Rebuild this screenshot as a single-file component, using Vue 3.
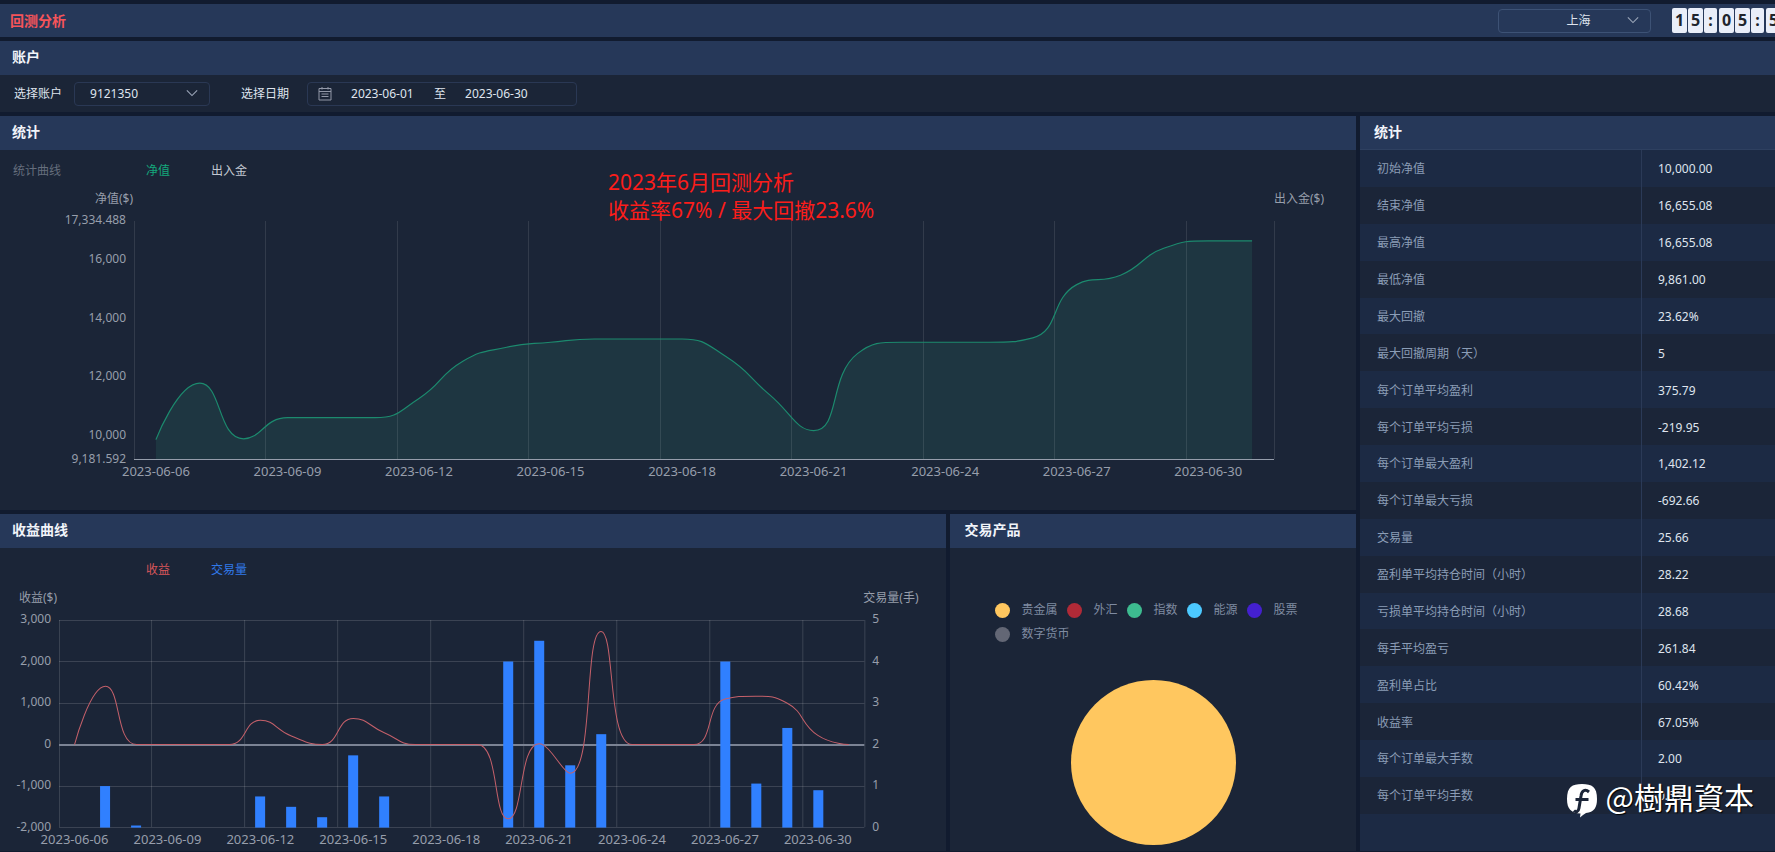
<template>
  <div class="page">
    <header class="topbar">
      <h1 class="topbar-title">回测分析</h1>
      <div class="select-box city">
        <select v-model="city" aria-label="城市">
          <option>上海</option>
        </select>
        <svg class="arrow" viewBox="0 0 14 8"><path d="M1 1l6 6 6-6" /></svg>
      </div>
      <div class="clock">
        <span v-for="(c, i) in clock" :key="i" :class="c === ':' ? 'colon' : 'digit'">{{ c }}</span>
      </div>
    </header>

    <section class="panel">
      <h2 class="panel-title">账户</h2>
      <form class="filters">
        <label for="account">选择账户</label>
        <div class="select-box account">
          <select id="account" v-model="account">
            <option>9121350</option>
          </select>
          <svg class="arrow" viewBox="0 0 14 8"><path d="M1 1l6 6 6-6" /></svg>
        </div>
        <label for="start" class="date-label">选择日期</label>
        <div class="range">
          <svg class="calendar" viewBox="0 0 14 14">
            <path d="M1 1.5h12v11.500h-12zM1 4.500h12M4 0v2.500M10 0v2.500M3.500 7h7M3.500 9.500h7" />
          </svg>
          <input id="start" v-model="startDate" type="text" />
          <span>至</span>
          <input v-model="endDate" type="text" aria-label="结束日期" />
        </div>
      </form>
    </section>

    <main class="content">
      <div class="charts">
        <section class="panel net">
          <h2 class="panel-title">统计</h2>
          <div class="tabs">
            <span class="tabs-name">统计曲线</span>
            <button type="button" class="green">净值</button>
            <button type="button">出入金</button>
          </div>
          <svg class="chart" viewBox="0 0 1356 318">
            <text x="133" y="11" text-anchor="end">净值($)</text>
            <text x="1274" y="11">出入金($)</text>
            <path class="area" :d="netArea" />
            <line v-for="x in netGrid" :key="x" class="grid" :x1="x" :x2="x" y1="29" y2="267" />
            <path class="net-line" :d="netLine" />
            <line class="axis" x1="134" x2="1274" y1="267.5" y2="267.5" />
            <text v-for="t in netTicks" :key="t.label" x="126" :y="t.y" text-anchor="end">{{ t.label }}</text>
            <text
              v-for="(d, i) in dates"
              :key="d"
              class="date"
              :x="net.left + net.step * (i * 3 + 0.5)"
              y="284"
              text-anchor="middle"
            >{{ d }}</text>
          </svg>
          <!-- 标注 -->
          <p class="note">2023年6月回测分析<br />收益率67% / 最大回撤23.6%</p>
        </section>

        <div class="bottom">
          <section class="panel">
            <h2 class="panel-title">收益曲线</h2>
            <div class="tabs profit-tabs">
              <button type="button" class="red">收益</button>
              <button type="button" class="blue">交易量</button>
            </div>
            <svg class="chart" viewBox="0 0 946 260">
              <text x="19" y="11">收益($)</text>
              <text x="863" y="11">交易量(手)</text>
              <line v-for="x in profitGrid" :key="'v' + x" class="grid bright" :x1="x" :x2="x" y1="29" y2="236" />
              <line v-for="y in profitRows" :key="'h' + y" class="grid bright" x1="59" x2="864" :y1="y" :y2="y" />
              <line class="axis zero" x1="59" x2="864" y1="154" y2="154" />
              <rect
                v-for="b in bars"
                :key="b.x"
                class="bar"
                :x="b.x"
                :y="b.y"
                width="10"
                :height="b.height"
              />
              <path class="profit-line" :d="profitLine" />
              <text v-for="(t, i) in profitTicks" :key="t" x="51" :y="32 + i * 41.5" text-anchor="end">{{ t }}</text>
              <text v-for="n in 6" :key="n" x="872" :y="32 + (n - 1) * 41.5">{{ 6 - n }}</text>
              <text
                v-for="(d, i) in dates"
                :key="d"
                class="date"
                :x="profit.left + profit.step * (i * 3 + 0.5)"
                y="253"
                text-anchor="middle"
              >{{ d }}</text>
            </svg>
          </section>

          <section class="panel products">
            <h2 class="panel-title">交易产品</h2>
            <ul class="legend">
              <li v-for="p in products" :key="p.name">
                <i :style="{ backgroundColor: p.color }"></i>{{ p.name }}
              </li>
            </ul>
            <div class="pie"></div>
          </section>
        </div>
      </div>

      <section class="panel stats">
        <h2 class="panel-title">统计</h2>
        <table>
          <tbody>
            <tr v-for="row in stats" :key="row[0]">
              <th scope="row">{{ row[0] }}</th>
              <td>{{ row[1] }}</td>
            </tr>
          </tbody>
        </table>
      </section>
    </main>

    <div class="watermark">
      <svg viewBox="0 0 30 34">
        <path
          class="mark"
          d="M15 0C25 0 30 3 30 15C30 24 27 28 19 29C17 30 15 32 13 33.500L13.500 29.500C4 29 0 25 0 15C0 3 5 0 15 0Z"
        />
        <path class="f" d="M22 8C18 4.500 14.500 7 14 12L12 24C11.500 28 9 28.500 7 26.500M8.500 15.500H21.500" />
      </svg>
      <span>@樹鼎資本</span>
    </div>
  </div>
</template>

<script setup>
import { ref } from 'vue'

const city = ref('上海')
const account = ref('9121350')
const startDate = ref('2023-06-01')
const endDate = ref('2023-06-30')
const clock = '15:05:5'.split('')

const dates = [
  '2023-06-06', '2023-06-09', '2023-06-12', '2023-06-15', '2023-06-18',
  '2023-06-21', '2023-06-24', '2023-06-27', '2023-06-30'
]

const clamp = (v, a, b) => Math.max(Math.min(v, Math.max(a, b)), Math.min(a, b))

// 平滑曲线，控制点限制在相邻两点之间，避免过冲
const smoothPath = (points) => {
  let d = `M${points[0][0]} ${points[0][1]}`
  let out = points[0]
  for (let i = 1; i < points.length; i++) {
    const prev = points[i - 1]
    const cur = points[i]
    const next = points[i + 1]
    let cpIn = cur
    let cpOut = cur
    if (next) {
      const lenPrev = Math.hypot(cur[0] - prev[0], cur[1] - prev[1])
      const lenNext = Math.hypot(next[0] - cur[0], next[1] - cur[1])
      const ratio = lenNext / (lenNext + lenPrev)
      cpOut = cur.map((c, k) => clamp(c + (next[k] - prev[k]) * 0.5 * ratio, c, next[k]))
      cpIn = cur.map((c, k) => clamp(c - ((cpOut[k] - c) * lenPrev) / lenNext, prev[k], c))
      cpOut = cur.map((c, k) => c + ((c - cpIn[k]) * lenNext) / lenPrev)
    }
    d += `C${out[0]} ${out[1]} ${cpIn[0]} ${cpIn[1]} ${cur[0]} ${cur[1]}`
    out = cpOut
  }
  return d
}

// 净值
const net = { left: 134, step: 1140 / 26, top: 29, bottom: 267.5, min: 9181.592, max: 17334.488 }
const netY = (v) => net.bottom - ((v - net.min) / (net.max - net.min)) * (net.bottom - net.top)
const netValues = [
  9861, 11790, 9890, 10610, 10610, 10610, 11270, 12540, 13020, 13190, 13300, 13300, 13300,
  12700, 11390, 10170, 12800, 13190, 13190, 13190, 13340, 15160, 15480, 16410, 16655, 16655
]
const netPoints = netValues.map((v, i) => [net.left + net.step * (i + 0.5), netY(v)])
const netLine = smoothPath(netPoints)
const netArea = `${netLine}V${net.bottom}H${netPoints[0][0]}Z`
const netGrid = [0, 3, 6, 9, 12, 15, 18, 21, 24, 26].map((i) => Math.floor(net.left + net.step * i) + 0.5)
const netTicks = [17334.488, 16000, 14000, 12000, 10000, 9181.592].map((v) => ({
  label: v.toLocaleString('en-US', { maximumFractionDigits: 3 }),
  y: netY(v) + 3
}))

// 收益与交易量
const profit = { left: 59, step: 805 / 26, top: 29, row: 41.5 }
const profitValues = [
  0, 1402, 0, 0, 0, 0, 585, 205, 0, 630, 285, 0, 0,
  0, -1790, 20, -692, 2725, 0, 0, 0, 1095, 1165, 1000, 220, 0
]
const volumes = [
  0, 1, 0.05, 0, 0, 0, 0.75, 0.5, 0.25, 1.74, 0.75, 0, 0,
  0, 4, 4.5, 1.5, 2.25, 0, 0, 0, 4, 1.06, 2.4, 0.9, 0
]
const profitLine = smoothPath(
  profitValues.map((v, i) => [
    profit.left + profit.step * (i + 0.5),
    profit.top + (3 - v / 1000) * profit.row
  ])
)
const bars = volumes
  .map((v, i) => ({
    x: Math.round(profit.left + profit.step * (i + 0.5) - 5),
    y: profit.top + (5 - v) * profit.row,
    height: v * profit.row
  }))
  .filter((b) => b.height > 0)
const profitGrid = [0, 3, 6, 9, 12, 15, 18, 21, 24, 26].map((i) => Math.floor(profit.left + profit.step * i) + 0.5)
const profitRows = [0, 1, 2, 4, 5].map((i) => Math.floor(profit.top + profit.row * i) + 0.5)
const profitTicks = ['3,000', '2,000', '1,000', '0', '-1,000', '-2,000']

const products = [
  { name: '贵金属', color: '#ffc75f' },
  { name: '外汇', color: '#b02a37' },
  { name: '指数', color: '#3dbb8f' },
  { name: '能源', color: '#4cc9ff' },
  { name: '股票', color: '#4420cf' },
  { name: '数字货币', color: '#636775' }
]

const stats = [
  ['初始净值', '10,000.00'],
  ['结束净值', '16,655.08'],
  ['最高净值', '16,655.08'],
  ['最低净值', '9,861.00'],
  ['最大回撤', '23.62%'],
  ['最大回撤周期（天）', '5'],
  ['每个订单平均盈利', '375.79'],
  ['每个订单平均亏损', '-219.95'],
  ['每个订单最大盈利', '1,402.12'],
  ['每个订单最大亏损', '-692.66'],
  ['交易量', '25.66'],
  ['盈利单平均持仓时间（小时）', '28.22'],
  ['亏损单平均持仓时间（小时）', '28.68'],
  ['每手平均盈亏', '261.84'],
  ['盈利单占比', '60.42%'],
  ['收益率', '67.05%'],
  ['每个订单最大手数', '2.00'],
  ['每个订单平均手数', '0.53']
]
</script>

<style>
body {
  margin: 0;
  background: #111b2f;
}
</style>

<style scoped>
.page {
  position: relative;
  box-sizing: border-box;
  min-height: 100vh;
  padding: 4px 0 1px;
  display: flex;
  flex-direction: column;
  gap: 4px;
  overflow: hidden;
  background: #111b2f;
  color: #dfe4ee;
  font-family: 'Noto Sans', 'Noto Sans CJK SC', sans-serif;
  font-size: 12px;
  line-height: 18px;
}

.topbar {
  display: flex;
  align-items: center;
  height: 33px;
  padding-left: 10px;
  overflow: hidden;
  background: #263859;
}

.topbar-title {
  margin: 0 auto 0 0;
  color: #f5545a;
  font-size: 14px;
  font-weight: 700;
}

.select-box {
  position: relative;
  box-sizing: border-box;
  height: 24px;
  border: 1px solid #2a3854;
  border-radius: 4px;
}

.select-box select {
  width: 100%;
  height: 100%;
  padding: 0 15px;
  border: 0;
  background: transparent;
  color: inherit;
  font: inherit;
  appearance: none;
}

.arrow {
  position: absolute;
  top: 6px;
  right: 11px;
  width: 12px;
  height: 8px;
  fill: none;
  stroke: #9aa5b8;
  stroke-width: 1.3;
  pointer-events: none;
}

.city {
  width: 153px;
  border-color: #3d5275;
}

.city select {
  padding: 0 12px 0 20px;
  text-align: center;
  text-align-last: center;
}

.clock {
  display: flex;
  flex: none;
  gap: 1px;
  width: 103px;
  margin-left: 21px;
}

.clock span {
  flex: none;
  height: 25px;
  border-radius: 2px;
  background: #e9eef9;
  color: #20242c;
  font-size: 16px;
  font-weight: 700;
  line-height: 25px;
  text-align: center;
}

.digit {
  width: 15px;
}

.clock .colon {
  width: 13px;
  margin-right: 1px;
}

.panel {
  min-width: 0;
  background: #1b2537;
}

.panel-title {
  box-sizing: border-box;
  height: 34px;
  margin: 0;
  padding-left: 12px;
  background: #263859;
  color: #f1f4fa;
  font-size: 14px;
  font-weight: 700;
  line-height: 32px;
}

.products .panel-title,
.stats .panel-title {
  padding-left: 14px;
}

.filters {
  display: flex;
  align-items: center;
  height: 37px;
  padding-left: 14px;
}

.account {
  width: 136px;
  margin-left: 12px;
}

.date-label {
  margin-left: 31px;
}

.range {
  display: flex;
  align-items: center;
  gap: 19px;
  box-sizing: border-box;
  width: 270px;
  height: 24px;
  margin-left: 18px;
  padding-left: 10px;
  border: 1px solid #2a3854;
  border-radius: 4px;
}

.range input {
  width: 64px;
  padding: 0;
  border: 0;
  background: transparent;
  color: inherit;
  font: inherit;
}

.calendar {
  width: 14px;
  height: 14px;
  fill: none;
  stroke: #9298a8;
  stroke-width: 1;
}

.content {
  display: grid;
  flex: 1;
  grid-template-columns: minmax(0, 1fr) 415px;
  gap: 4px;
}

.charts {
  display: flex;
  flex-direction: column;
  gap: 4px;
}

.net {
  position: relative;
}

.tabs {
  display: flex;
  align-items: center;
  height: 42px;
  padding-left: 13px;
}

.tabs-name {
  width: 133px;
  color: #656e7d;
}

.tabs button {
  margin-right: 41px;
  padding: 0;
  border: 0;
  background: none;
  color: #c3c8d1;
  font: inherit;
  cursor: pointer;
}

.tabs .green {
  color: #14a87c;
}

.tabs .red {
  color: #d9565a;
}

.tabs .blue {
  color: #3179e8;
}

.profit-tabs {
  height: 43px;
  padding-left: 146px;
}

.chart {
  display: block;
  width: 100%;
}

.chart text {
  fill: #979eab;
  font-size: 12px;
}

.chart .date {
  font-size: 13px;
}

.grid {
  stroke: #fff;
  stroke-opacity: 0.1;
  stroke-width: 1;
}

.bright {
  stroke-opacity: 0.14;
}

.axis {
  stroke: #959dab;
  stroke-width: 1;
}

.zero {
  stroke: #7b8394;
  stroke-width: 2;
}

.area {
  fill: #1e3641;
}

.net-line {
  fill: none;
  stroke: #1c8a6e;
  stroke-width: 1.2;
}

.profit-line {
  fill: none;
  stroke: #c4606a;
  stroke-width: 1;
}

.bar {
  fill: #3080ff;
}

.note {
  position: absolute;
  top: 52px;
  left: 608px;
  margin: 0;
  color: #fc1d1a;
  font-size: 21px;
  font-weight: 400;
  line-height: 28px;
}

.bottom {
  display: grid;
  flex: 1;
  grid-template-columns: minmax(0, 7fr) minmax(0, 3fr);
  gap: 4px;
}

.legend {
  display: flex;
  flex-wrap: wrap;
  column-gap: 10px;
  margin: 0;
  padding: 50px 45px 0;
  color: #7f8ba1;
  line-height: 24px;
  list-style: none;
}

.legend li {
  display: flex;
  align-items: center;
  gap: 11px;
}

.legend i {
  width: 15px;
  height: 15px;
  border-radius: 50%;
}

.pie {
  width: 165px;
  height: 165px;
  margin: 34px auto 0;
  border-radius: 50%;
  background: #ffc75f;
}

.stats {
  background: #1c2a44;
}

.stats .panel-title {
  border-bottom: 1px solid #2e4060;
}

.stats table {
  width: 100%;
  height: 664px;
  border-spacing: 0;
}

.stats th {
  box-sizing: border-box;
  width: 282px;
  padding: 2px 0 0 17px;
  border-right: 1px solid #2b3a57;
  color: #8b9db6;
  font-weight: 400;
  text-align: left;
}

.stats td {
  padding: 2px 0 0 16px;
}

.stats tr:nth-child(even) {
  background: #1b2538;
}

.watermark {
  position: absolute;
  right: 21px;
  bottom: 34px;
  display: flex;
  align-items: center;
  gap: 9px;
  color: #fff;
  font-family: 'Noto Sans CJK TC', sans-serif;
  font-size: 30px;
  font-weight: 400;
  line-height: 40px;
  text-shadow: 1px 1px 1px #000;
}

.watermark svg {
  width: 30px;
  height: 34px;
  margin-top: 10px;
}

.mark {
  fill: #fff;
}

.f {
  fill: none;
  stroke: #1b2538;
  stroke-width: 3;
}
</style>
